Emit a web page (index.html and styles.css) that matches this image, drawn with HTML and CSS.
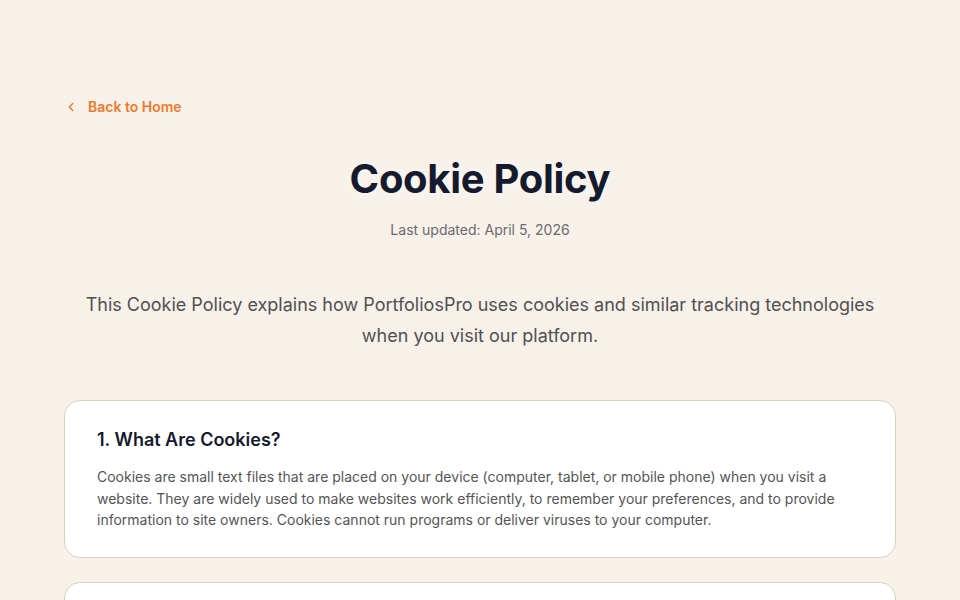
FILE: index.html
```html
<!DOCTYPE html>
<html lang="en">
<head>
<meta charset="utf-8">
<title>Cookie Policy</title>
<link rel="stylesheet" href="styles.css">
</head>
<body>
<main class="page">
  <a class="back" href="#">
    <svg class="back-icon" viewBox="0 0 24 24" fill="none" stroke="currentColor" stroke-width="2.5" stroke-linecap="round" stroke-linejoin="round"><path d="M15 18l-6-6 6-6"/></svg>
    <span>Back to Home</span>
  </a>
  <header class="header">
    <h1 class="title">Cookie Policy</h1>
    <p class="updated">Last updated: April 5, 2026</p>
  </header>
  <p class="intro">This Cookie Policy explains how PortfoliosPro uses cookies and similar tracking technologies when you visit our platform.</p>
  <section class="card">
    <h2 class="card-title">1. What Are Cookies?</h2>
    <p class="card-text">Cookies are small text files that are placed on your device (computer, tablet, or mobile phone) when you visit a website. They are widely used to make websites work efficiently, to remember your preferences, and to provide information to site owners. Cookies cannot run programs or deliver viruses to your computer.</p>
  </section>
  <section class="card">
    <h2 class="card-title">2. How We Use Cookies</h2>
    <p class="card-text">We use cookies to keep you signed in, remember your settings, and understand how our platform is used so we can improve it.</p>
  </section>
</main>
</body>
</html>
```

FILE: styles.css
```css
html, body {
  margin: 0;
  padding: 0;
}
body {
  background: #f8f1ea;
  font-family: Inter, "Noto Sans", sans-serif;
  color: #161a2d;
}
.page {
  max-width: 832px;
  margin: 0 auto;
  padding: 97px 32px 48px;
}
.back {
  display: inline-flex;
  align-items: center;
  gap: 10px;
  color: #ee7a2a;
  text-decoration: none;
  font-size: 14px;
  font-weight: 600;
  line-height: 20px;
}
.back-icon {
  width: 14px;
  height: 14px;
}
.header {
  text-align: center;
  margin-top: 41px;
}
.title {
  margin: 0;
  font-size: 40px;
  line-height: 40px;
  font-weight: 700;
  color: #151a2d;
  letter-spacing: -0.3px;
  text-shadow: 0 0 12px rgba(255, 255, 255, 0.6);
}
.updated {
  margin: 21px 0 0;
  font-size: 14px;
  line-height: 20px;
  color: #6b6b6b;
}
.intro {
  margin: 49px 0 0;
  text-align: center;
  font-size: 18px;
  line-height: 31px;
  color: #505050;
}
.card {
  margin-top: 49px;
  background: #fff;
  border: 1px solid #d9d1c4;
  border-radius: 16px;
  padding: 25px 32px 26px;
}
.card + .card {
  margin-top: 24px;
}
.card-title {
  margin: 0;
  font-size: 18px;
  line-height: 28px;
  font-weight: 600;
  color: #161a2d;
}
.card-text {
  margin: 12px 0 0;
  font-size: 14px;
  line-height: 21.7px;
  color: #555;
}
```
